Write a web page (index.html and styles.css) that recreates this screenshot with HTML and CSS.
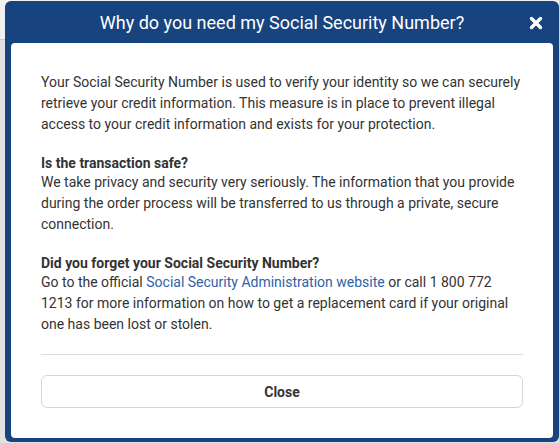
FILE: index.html
```html
<!DOCTYPE html>
<html lang="en">
<head>
    <meta charset="UTF-8">
    <meta name="viewport" content="width=device-width, initial-scale=1.0">
    <title>Social Security Number</title>
    <link rel="stylesheet" href="styles.css">
</head>
<body>

    <div class="modal">
        <div class="modal-header">
            <h2>Why do you need my Social Security Number?</h2>
            <button class="modal-close" aria-label="Close">
                <svg width="14" height="14" viewBox="0 0 14 14">
                    <path d="M2.5 2.5 L11.5 11.5 M11.5 2.5 L2.5 11.5" stroke="#fff" stroke-width="3.4" stroke-linecap="round"/>
                </svg>
            </button>
        </div>

        <div class="modal-body">
            <p>Your Social Security Number is used to verify your identity so we can securely retrieve your credit information. This measure is in place to prevent illegal access to your credit information and exists for your protection.</p>

            <h3>Is the transaction safe?</h3>
            <p>We take privacy and security very seriously. The information that you provide during the order process will be transferred to us through a private, secure connection.</p>

            <h3>Did you forget your Social Security Number?</h3>
            <p>Go to the official <a href="#">Social Security Administration website</a> or call 1 800 772 1213 for more information on how to get a replacement card if your original one has been lost or stolen.</p>

            <hr>

            <button class="btn-close">Close</button>
        </div>
    </div>

</body>
</html>
```

FILE: styles.css
```css
body {
    margin: 0;
    height: 443px;
    overflow: hidden;
    font-family: Roboto, "Liberation Sans", Arial, sans-serif;
    background: linear-gradient(#f1f1f1 0 39px, #cfc6da 39px 40px, #e2e2e2 40px);
}

.modal {
    margin: 1px 0 0 5px;
    width: 554px;
    height: 441px;
    background-color: #17437f;
    border-radius: 6px;
    display: flex;
    flex-direction: column;
}

.modal-header {
    flex-shrink: 0;
    height: 42px;
    display: flex;
    align-items: center;
    justify-content: center;
    position: relative;
}
.modal-header h2 {
    margin: 0;
    font-size: 18px;
    font-weight: normal;
    color: #fff;
}
.modal-close {
    position: absolute;
    right: 16px;
    top: 15px;
    padding: 0;
    border: none;
    background: none;
    width: 14px;
    height: 14px;
    cursor: pointer;
}
.modal-close svg {
    display: block;
}

.modal-body {
    flex: 1;
    min-height: 0;
    margin: 0 6px 4px;
    background-color: #fff;
    border-radius: 4px;
    padding: 29px 30px 30px;
    font-size: 14px;
    color: #333;
    display: flex;
    flex-direction: column;
}
.modal-body p {
    margin: 0 0 19px;
    line-height: 21px;
}
.modal-body h3 {
    margin: 0;
    font-size: 14px;
    line-height: 18px;
    font-weight: bold;
}
.modal-body a {
    color: #2f62a6;
    text-decoration: none;
}
.modal-body hr {
    flex-shrink: 0;
    margin: 0 0 20px;
    border: none;
    border-top: 1px solid #dcdcdc;
}

.btn-close {
    flex-shrink: 0;
    height: 33px;
    background-color: #fff;
    border: 1px solid #d6d6d6;
    border-radius: 6px;
    font-family: inherit;
    font-size: 14px;
    font-weight: bold;
    color: #333;
    cursor: pointer;
}
```
